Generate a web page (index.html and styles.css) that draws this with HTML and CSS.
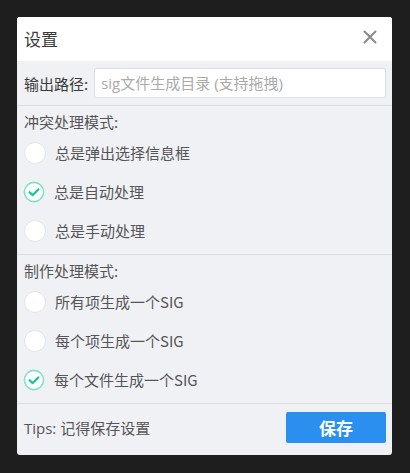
FILE: index.html
```html
<!DOCTYPE html>
<html lang="zh-CN">
<head>
<meta charset="utf-8">
<title>设置</title>
<link rel="stylesheet" href="styles.css">
</head>
<body>
<div class="dialog">
  <div class="titlebar">
    <span class="title">设置</span>
    <svg class="close" width="14" height="14" viewBox="0 0 14 14"><path d="M1.5 1.5 L12.5 12.5 M12.5 1.5 L1.5 12.5" stroke="#8a8a8a" stroke-width="2" stroke-linecap="round"/></svg>
  </div>
  <div class="pathrow">
    <span class="label">输出路径:</span>
    <div class="input">sig文件生成目录 (支持拖拽)</div>
  </div>
  <div class="section">
    <div class="section-label">冲突处理模式:</div>
    <div class="opt"><span class="radio"></span><span>总是弹出选择信息框</span></div>
    <div class="opt"><svg class="radio-on" width="22" height="22" viewBox="0 0 22 22"><circle cx="11" cy="11" r="9.6" fill="#fff" stroke="#7fe3c4" stroke-width="1.6"/><path d="M6.6 11.2 L9.7 14.1 L15.3 8.4" fill="none" stroke="#17c596" stroke-width="2.2" stroke-linecap="round" stroke-linejoin="round"/></svg><span>总是自动处理</span></div>
    <div class="opt"><span class="radio"></span><span>总是手动处理</span></div>
  </div>
  <div class="section">
    <div class="section-label">制作处理模式:</div>
    <div class="opt"><span class="radio"></span><span>所有项生成一个SIG</span></div>
    <div class="opt"><span class="radio"></span><span>每个项生成一个SIG</span></div>
    <div class="opt"><svg class="radio-on" width="22" height="22" viewBox="0 0 22 22"><circle cx="11" cy="11" r="9.6" fill="#fff" stroke="#7fe3c4" stroke-width="1.6"/><path d="M6.6 11.2 L9.7 14.1 L15.3 8.4" fill="none" stroke="#17c596" stroke-width="2.2" stroke-linecap="round" stroke-linejoin="round"/></svg><span>每个文件生成一个SIG</span></div>
  </div>
  <div class="footer">
    <span class="tips">Tips: 记得保存设置</span>
    <button class="save">保存</button>
  </div>
</div>
</body>
</html>
```
FILE: styles.css
```css
html, body {
  margin: 0;
  padding: 0;
  background: #1e1e1e;
}
body {
  padding: 17px 0 0 17px;
  font-family: "Noto Sans CJK SC", "Noto Sans", sans-serif;
  color: #555;
}
.dialog {
  width: 375px;
  height: 438px;
  background: #f0f1f5;
  border-radius: 3px;
  overflow: hidden;
  display: flex;
  flex-direction: column;
}
.titlebar {
  height: 44px;
  background: #fff;
  display: flex;
  align-items: center;
  justify-content: space-between;
  padding: 0 15px 0 7px;
}
.title {
  font-size: 17px;
  color: #3a3a3a;
  line-height: 20px;
}
.close {
  display: block;
  margin-top: -4px;
}
.pathrow {
  display: flex;
  align-items: center;
  gap: 6px;
  padding: 7px 6px 7px 7px;
  border-bottom: 1px solid #dcdde1;
}
.label {
  font-size: 15px;
  color: #3a3a3a;
  white-space: nowrap;
}
.input {
  flex: 1;
  height: 28px;
  background: #fff;
  border: 1px solid #dcdfe4;
  border-radius: 2px;
  font-family: "Open Sans", "Noto Sans CJK SC", sans-serif;
  font-size: 15px;
  color: #aaa;
  line-height: 28px;
  padding-left: 6px;
}
.section {
  padding: 5px 6px 4px 7px;
  border-bottom: 1px solid #dcdde1;
}
.section-label {
  font-size: 15px;
  line-height: 22px;
  color: #555;
}
.opt {
  height: 39px;
  display: flex;
  align-items: center;
  gap: 9px;
  font-size: 15px;
  color: #555;
}
.radio {
  width: 20px;
  height: 20px;
  border-radius: 50%;
  background: #fff;
  border: 1px solid #e4e5e8;
  flex: none;
}
.radio-on {
  display: block;
  flex: none;
  margin-left: -1px;
}
.footer {
  flex: 1;
  display: flex;
  align-items: center;
  justify-content: space-between;
  padding: 0 6px 4px 7px;
}
.tips {
  font-size: 15px;
  color: #555;
  font-family: "Open Sans", "Noto Sans CJK SC", sans-serif;
}
.save {
  width: 100px;
  height: 31px;
  border: none;
  border-radius: 2px;
  background: #2b8ff0;
  color: #fff;
  font-family: "Noto Sans CJK SC", sans-serif;
  font-size: 17px;
  font-weight: bold;
  padding: 0;
}
```
